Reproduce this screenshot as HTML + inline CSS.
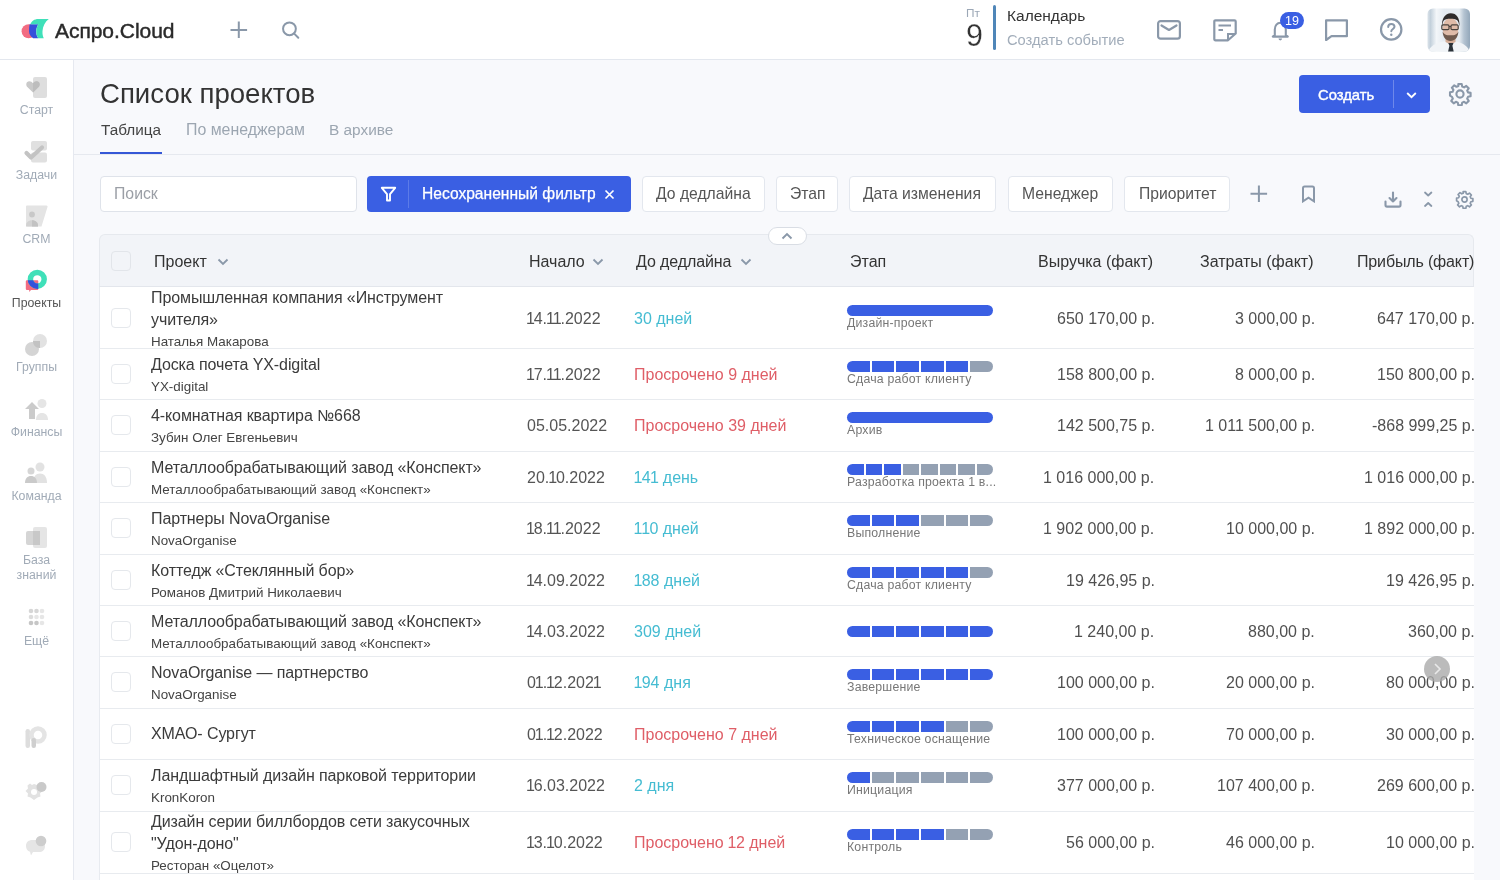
<!DOCTYPE html>
<html lang="ru">
<head>
<meta charset="utf-8">
<title>Список проектов</title>
<style>
*{box-sizing:border-box;margin:0;padding:0}
html,body{width:1500px;height:880px;overflow:hidden}
body{font-family:"Liberation Sans",sans-serif;background:#f8f9fc;color:#333;position:relative}
.abs{position:absolute}
.t{position:absolute;white-space:nowrap;will-change:transform}
.box{position:absolute;background:#fff;border:1px solid #e3e7ee;border-radius:4px}
.cb{position:absolute;width:20px;height:20px;border:1px solid #e5e8ec;border-radius:4px;background:#fff}
#rows{position:absolute;left:0;top:0;width:1474px;height:880px;overflow:hidden}
.rowbg{position:absolute;left:99px;width:1375px;background:#fff}
.hline{position:absolute;left:99px;width:1375px;height:1px;background:#e8ebef}
.stage{position:absolute;width:146px}
.n1{margin:0 -1.1px}
.m1{margin:0 -0.6px}
.bar{width:146px;height:11px}
.segs{display:flex;gap:2px}
.segs i{flex:1;height:11px;display:block}
</style>
</head>
<body>
<div class="abs" style="left:0;top:0;width:1500px;height:59px;background:#fff"></div>
<div class="abs" style="left:0;top:59px;width:1500px;height:1px;background:#e3e7ee"></div>
<svg class="abs" style="left:18px;top:15px" width="34" height="27" viewBox="0 0 34 27">
<circle cx="10.6" cy="16.3" r="7" fill="#f26c82"/>
<path d="M11.6 9.3H20.3C19 11.5 18.2 14 18.2 16.5C18.2 19.2 19 21.4 20.3 23.3H15.2C12.8 21.8 11 19.3 11 16.3C11 13.8 11.2 11.3 11.6 9.3Z" fill="#3451db"/>
<path d="M12.3 9.3C13.5 6.2 16.3 4 20.3 4H30.8C27.2 6.8 24.8 11 24.5 16C24.3 19 24.8 21.4 25.8 23.3H20.3C19 21.4 18.2 19.2 18.2 16.5C18.2 14 19 11.5 20.3 9.3Z" fill="#3fe0b9"/>
</svg>
<div class="t" style="left:55px;top:18.00px;font-size:21px;line-height:26px;color:#2a2a2a;-webkit-text-stroke:0.45px #2a2a2a;letter-spacing:-0.05px">Аспро.Cloud</div>
<svg class="abs" style="left:229px;top:20px" width="20" height="20" viewBox="0 0 20 20"><path d="M9.8 1.6V17.9M1.5 9.9H18.1" stroke="#8a98a9" stroke-width="2" fill="none"/></svg>
<svg class="abs" style="left:281px;top:20px" width="20" height="20" viewBox="0 0 20 20"><circle cx="8.45" cy="8.8" r="6.4" stroke="#8a98a9" stroke-width="2" fill="none"/><path d="M13.2 13.6L17.3 17.7" stroke="#8a98a9" stroke-width="2" stroke-linecap="round"/></svg>
<div class="t" style="left:965.5px;top:6.00px;font-size:11.8px;line-height:15px;color:#9ba7b6;">Пт</div>
<div class="t" style="left:965.5px;top:16.00px;font-size:30.5px;line-height:38px;color:#333;-webkit-text-stroke:0.25px #fff">9</div>
<div class="abs" style="left:993px;top:5px;width:3px;height:45px;background:#4f86b8;border-radius:2px"></div>
<div class="t" style="left:1006.5px;top:6.00px;font-size:15.5px;line-height:19px;color:#333;">Календарь</div>
<div class="t" style="left:1006.5px;top:31.00px;font-size:14.7px;line-height:18px;color:#a2adba;">Создать событие</div>
<svg class="abs" style="left:1156px;top:19px" width="26" height="22" viewBox="0 0 26 22"><rect x="2.1" y="2.1" width="21.8" height="17.6" rx="2.5" stroke="#8a98a9" stroke-width="2.2" fill="none"/><path d="M5.5 6.5L13 11L20.5 6.5" stroke="#8a98a9" stroke-width="2.2" fill="none" stroke-linecap="round" stroke-linejoin="round"/></svg>
<svg class="abs" style="left:1212px;top:18px" width="26" height="24" viewBox="0 0 26 24"><path d="M2.3 3.5Q2.3 2.3 3.5 2.3H22.5Q23.7 2.3 23.7 3.5V15.5L16 22.3H3.5Q2.3 22.3 2.3 21.1Z" stroke="#8a98a9" stroke-width="2.2" fill="none" stroke-linejoin="round"/><path d="M16 22V16H23" stroke="#8a98a9" stroke-width="2" fill="none"/><path d="M6.5 7.6H19M6.5 12H11" stroke="#8a98a9" stroke-width="2" fill="none"/></svg>
<svg class="abs" style="left:1270px;top:18px" width="22" height="24" viewBox="0 0 22 24"><path d="M4.8 17V11.5C4.8 7.6 7.3 4.8 10.3 4.8C13.3 4.8 15.8 7.6 15.8 11.5V17L17.8 18.6H2.8Z" stroke="#8a98a9" stroke-width="2.1" fill="none" stroke-linejoin="round"/><path d="M8.5 20.6A1.8 1.8 0 0 0 12.1 20.6Z" fill="#8a98a9"/></svg>
<div class="abs" style="left:1280px;top:12px;width:24px;height:17px;border-radius:9px;background:#3a5fe3"></div>
<div class="t" style="left:1280px;top:13.00px;font-size:12.5px;line-height:16px;color:#fff;width:24px;text-align:center;">19</div>
<svg class="abs" style="left:1324px;top:18px" width="25" height="23" viewBox="0 0 25 23"><path d="M2.1 2.3H22.9V18.2H7.5L2.1 22Z" stroke="#8a98a9" stroke-width="2.2" fill="none" stroke-linejoin="round"/></svg>
<svg class="abs" style="left:1379px;top:17px" width="25" height="25" viewBox="0 0 25 25"><circle cx="12.2" cy="12.4" r="10.2" stroke="#8a98a9" stroke-width="2.2" fill="none"/><path d="M9.2 10C9.2 8 10.6 6.9 12.3 6.9C14.1 6.9 15.5 8 15.5 9.8C15.5 11.8 12.3 12.2 12.3 14.3" stroke="#8a98a9" stroke-width="2" fill="none" stroke-linecap="round"/><circle cx="12.3" cy="17.7" r="1.2" fill="#8a98a9"/></svg>
<svg class="abs" style="left:1427px;top:8px" width="43" height="44" viewBox="0 0 43 44">
<defs><clipPath id="avc"><rect x="0.5" y="0.5" width="42.5" height="43" rx="5.5"/></clipPath>
<linearGradient id="avbg" x1="0" x2="1" y1="0" y2="0"><stop offset="0" stop-color="#dfe6ec"/><stop offset="0.08" stop-color="#c3d0db"/><stop offset="0.22" stop-color="#f3f6f9"/><stop offset="0.4" stop-color="#e4eaf0"/><stop offset="0.75" stop-color="#e6ecf1"/><stop offset="0.86" stop-color="#b4c3d1"/><stop offset="1" stop-color="#93a7ba"/></linearGradient>
<filter id="avb" x="-10%" y="-10%" width="120%" height="120%"><feGaussianBlur stdDeviation="0.6"/></filter></defs>
<g clip-path="url(#avc)">
<rect width="43" height="44" fill="url(#avbg)"/>
<g filter="url(#avb)">
<path d="M1 44C3 38 9 35 15.5 33.5L23.5 32.5L31 34C37 35.5 41 39 43 44Z" fill="#f1f4f7"/>
<path d="M18.5 28H28.5V34L23.5 36.5L18.5 34Z" fill="#d4ad98"/>
<ellipse cx="23.5" cy="20.5" rx="7.9" ry="10.6" fill="#dfbba8"/>
<path d="M15.6 23.5C16 29.5 19 33 23.5 33C28 33 31 29.5 31.4 23.5C30 26.5 28 27.3 23.5 27.3C19 27.3 17 26.5 15.6 23.5Z" fill="#6f5a4d"/>
<path d="M15 19C14.5 10.5 18 5.2 23.8 5.2C29.6 5.2 33 9.8 32.5 18.5C32 15.5 31.2 13 30.2 12.2C28.5 11.2 26 10.8 23.5 10.8C20 10.8 17.8 11.3 16.8 12.5C15.9 13.7 15.4 16 15 19Z" fill="#2f2b29"/>
<rect x="14.8" y="16.8" width="7.2" height="4.8" rx="1.2" fill="none" stroke="#4a423c" stroke-width="1.2"/>
<rect x="24" y="16.8" width="7.2" height="4.8" rx="1.2" fill="none" stroke="#4a423c" stroke-width="1.2"/>
<path d="M22 18.5H24" stroke="#4a423c" stroke-width="1"/>
<path d="M21.3 35H26.5L25.4 37.8L26.8 44H21L22.4 37.8Z" fill="#2c3139"/>
</g>
</g></svg>
<div class="abs" style="left:0;top:60px;width:73px;height:820px;background:#fff"></div>
<div class="abs" style="left:73px;top:60px;width:1px;height:820px;background:#e6e9f0"></div>
<svg class="abs" style="left:21px;top:77px" width="30" height="23" viewBox="0 0 30 23"><rect x="12" y="0" width="14" height="21" rx="2" fill="#dedede"/><path d="M12 15.5L6.6 10.3C4.3 8 5.2 4.2 8.2 4.2C10 4.2 11 5 12 6.2C13 5 14 4.2 15.8 4.2C18.8 4.2 19.7 8 17.4 10.3Z" fill="#c9c9c9"/><path d="M12 6.2C13 5 14 4.2 15.8 4.2C18.8 4.2 19.7 8 17.4 10.3L12 15.5Z" fill="#bdbdbd"/></svg>
<div class="t" style="left:0px;top:103.00px;font-size:12.3px;line-height:15px;color:#a1abb7;width:73px;text-align:center;">Старт</div>
<svg class="abs" style="left:21px;top:141px" width="30" height="23" viewBox="0 0 30 23"><rect x="10" y="0" width="16" height="9.5" rx="2" fill="#e0e0e0"/><rect x="10" y="11.5" width="16" height="10" rx="2" fill="#e0e0e0"/><path d="M5.5 12L10 16.5L21 6.5" stroke="#c3c3c3" stroke-width="4.2" fill="none" stroke-linecap="round" stroke-linejoin="round"/></svg>
<div class="t" style="left:0px;top:168.00px;font-size:12.3px;line-height:15px;color:#a1abb7;width:73px;text-align:center;">Задачи</div>
<svg class="abs" style="left:21px;top:205px" width="30" height="23" viewBox="0 0 30 23"><path d="M6 0.5H25.5Q27 0.5 26.5 2L20.5 21.5H6.5Q5 21.5 5 20V1.5Q5 0.5 6 0.5Z" fill="#e4e4e4"/><circle cx="11" cy="9.5" r="2.9" fill="#c8c8c8"/><path d="M5 21.5V20.5C5 17.3 7.6 15.2 11 15.2C14.4 15.2 17 17.3 17 20.5V21.5Z" fill="#d2d2d2"/><path d="M11 15.2C14.4 15.2 17 17.3 17 20.5V21.5H11Z" fill="#c2c2c2"/></svg>
<div class="t" style="left:0px;top:232.00px;font-size:12.3px;line-height:15px;color:#a1abb7;width:73px;text-align:center;">CRM</div>
<svg class="abs" style="left:21px;top:269px" width="30" height="23" viewBox="0 0 30 23"><defs><clipPath id="bub"><path d="M6 11.3H16.3Q17.3 11.3 17.3 12.3V20Q17.3 21 16.3 21H10L8.2 23V21H6Q4.8 21 4.8 20V12.3Q4.8 11.3 6 11.3Z"/></clipPath></defs><path d="M6 11.3H16.3Q17.3 11.3 17.3 12.3V20Q17.3 21 16.3 21H10L8.2 23V21H6Q4.8 21 4.8 20V12.3Q4.8 11.3 6 11.3Z" fill="#f26c82"/><circle cx="16.3" cy="10.3" r="6.9" stroke="#3fe0b9" stroke-width="5.5" fill="none"/><circle cx="16.3" cy="10.3" r="6.9" stroke="#3451db" stroke-width="5.5" fill="none" clip-path="url(#bub)"/></svg>
<div class="t" style="left:0px;top:296.00px;font-size:12.3px;line-height:15px;color:#555;width:73px;text-align:center;">Проекты</div>
<svg class="abs" style="left:21px;top:334px" width="30" height="23" viewBox="0 0 30 23"><circle cx="19" cy="7" r="7" fill="#e2e2e2"/><circle cx="11" cy="15" r="7" fill="#d4d4d4"/><path d="M12 7H19V14H18.5C14.5 14 12 11 12 7Z" fill="#c2c2c2"/></svg>
<div class="t" style="left:0px;top:360.00px;font-size:12.3px;line-height:15px;color:#a1abb7;width:73px;text-align:center;">Группы</div>
<svg class="abs" style="left:21px;top:398.5px" width="30" height="23" viewBox="0 0 30 23"><circle cx="21" cy="4.5" r="4.5" fill="#e5e5e5"/><path d="M15 21C15 16.5 17.5 14 21 14C24.5 14 27 16.5 27 21Z" fill="#e5e5e5"/><path d="M11 3L4 10H8V20H14V10H18Z" fill="#cbcbcb"/></svg>
<div class="t" style="left:0px;top:425.00px;font-size:12.3px;line-height:15px;color:#a1abb7;width:73px;text-align:center;">Финансы</div>
<svg class="abs" style="left:21px;top:462px" width="30" height="23" viewBox="0 0 30 23"><circle cx="19" cy="5" r="4.5" fill="#e2e2e2"/><path d="M12 21C12 14.5 15 11.5 19 11.5C23 11.5 26 14.5 26 21Z" fill="#e2e2e2"/><circle cx="10" cy="9" r="3.5" fill="#d6d6d6"/><path d="M4 21C4 16.5 6.5 14 10 14C13.5 14 16 16.5 16 21Z" fill="#cacaca"/></svg>
<div class="t" style="left:0px;top:489.00px;font-size:12.3px;line-height:15px;color:#a1abb7;width:73px;text-align:center;">Команда</div>
<svg class="abs" style="left:21px;top:527px" width="30" height="23" viewBox="0 0 30 23"><rect x="12" y="0" width="14" height="21" rx="2" fill="#e5e5e5"/><rect x="5" y="4" width="14" height="14" rx="2" fill="#d5d5d5"/><rect x="12" y="4" width="7" height="14" fill="#c8c8c8"/></svg>
<div class="t" style="left:0px;top:553.00px;font-size:12.3px;line-height:15px;color:#a1abb7;width:73px;text-align:center;">База</div>
<svg class="abs" style="left:21px;top:608px" width="30" height="23" viewBox="0 0 30 23"><g><circle cx="10" cy="3" r="2.3" fill="#d6d6d6"/><circle cx="15.5" cy="3" r="2.3" fill="#d6d6d6"/><circle cx="21" cy="3" r="2.3" fill="#e6e6e6"/><circle cx="10" cy="9" r="2.3" fill="#dcdcdc"/><circle cx="15.5" cy="9" r="2.3" fill="#e6e6e6"/><circle cx="21" cy="9" r="2.3" fill="#e6e6e6"/><circle cx="10" cy="15" r="2.3" fill="#c6c6c6"/><circle cx="15.5" cy="15" r="2.3" fill="#c6c6c6"/><circle cx="21" cy="15" r="2.3" fill="#e6e6e6"/></g></svg>
<div class="t" style="left:0px;top:634.00px;font-size:12.3px;line-height:15px;color:#a1abb7;width:73px;text-align:center;">Ещё</div>
<div class="t" style="left:0px;top:568.00px;font-size:12.3px;line-height:15px;color:#a1abb7;width:73px;text-align:center;">знаний</div>
<svg class="abs" style="left:22px;top:726px" width="28" height="24" viewBox="0 0 28 24"><rect x="3.5" y="3" width="4.5" height="19" rx="2.2" fill="#dddddd"/><circle cx="16" cy="9" r="6.5" stroke="#e4e4e4" stroke-width="4.5" fill="none"/><rect x="9.5" y="12" width="4.5" height="10" rx="2.2" fill="#cfcfcf"/></svg>
<svg class="abs" style="left:22px;top:780px" width="28" height="24" viewBox="0 0 28 24"><path d="M12 4L15 5L17 3.5L19 5.5L18.5 8.5L20.5 11L18 13.5L18.5 16.5L15.5 17.5L12 20L8.5 17.5L5.5 16.5L6 13.5L3.5 11L6 8.5L5.5 5.5L8 3.5L10 5Z" fill="#e2e2e2"/><circle cx="12" cy="12" r="3" fill="#fff"/><circle cx="19.5" cy="7" r="5" fill="#c9c9c9"/></svg>
<svg class="abs" style="left:22px;top:833px" width="28" height="24" viewBox="0 0 28 24"><path d="M4 13C4 9 6.5 7 10.5 7H17C20.5 7 23 9 23 13C23 17 20.5 19 17 19H11L9 22.5L8 18.8C5.5 18 4 16 4 13Z" fill="#e5e5e5"/><circle cx="19" cy="8" r="5.3" fill="#cdcdcd"/></svg>
<div class="t" style="left:100px;top:77.00px;font-size:27.6px;line-height:34px;color:#333;">Список проектов</div>
<div class="t" style="left:100.5px;top:120.00px;font-size:15.3px;line-height:19px;color:#444;">Таблица</div>
<div class="t" style="left:185.5px;top:120.00px;font-size:15.9px;line-height:20px;color:#9ca6b1;">По менеджерам</div>
<div class="t" style="left:329.3px;top:120.00px;font-size:15.4px;line-height:19px;color:#9ca6b1;">В архиве</div>
<div class="abs" style="left:74px;top:154px;width:1426px;height:1px;background:#e6e9ef"></div>
<div class="abs" style="left:100px;top:152px;width:62px;height:2px;background:#3557d6"></div>
<div class="abs" style="left:1299px;top:75px;width:131px;height:38px;background:#3a5fe3;border-radius:4px"></div>
<div class="t" style="left:1318px;top:86.00px;font-size:14.8px;line-height:18px;color:#fff;-webkit-text-stroke:0.4px #fff">Создать</div>
<div class="abs" style="left:1393px;top:80px;width:1px;height:28px;background:#6e88ea"></div>
<svg class="abs" style="left:1405px;top:90px" width="13" height="10" viewBox="0 0 13 10"><path d="M2.2 3L6.5 7.2L10.8 3" stroke="#fff" stroke-width="1.8" fill="none"/></svg>
<svg class="abs" style="left:1448px;top:82px" width="24" height="24" viewBox="0 0 24 24"><path d="M10.3 2h3.4l.5 2.6 1.9.8 2.2-1.5 2.4 2.4-1.5 2.2.8 1.9 2.6.5v3.4l-2.6.5-.8 1.9 1.5 2.2-2.4 2.4-2.2-1.5-1.9.8-.5 2.6h-3.4l-.5-2.6-1.9-.8-2.2 1.5-2.4-2.4 1.5-2.2-.8-1.9L2 13.7v-3.4l2.6-.5.8-1.9-1.5-2.2 2.4-2.4 2.2 1.5 1.9-.8z" stroke="#8a98a9" stroke-width="2.1" fill="none" stroke-linejoin="round"/><circle cx="12" cy="12" r="3.6" stroke="#8a98a9" stroke-width="2.1" fill="none"/></svg>
<div class="box" style="left:100px;top:176px;width:257px;height:36px;border-color:#dfe3ea"></div>
<div class="t" style="left:114px;top:184.00px;font-size:15.8px;line-height:20px;color:#9b9fa6;">Поиск</div>
<div class="abs" style="left:367px;top:176px;width:264px;height:36px;background:#3a5fe3;border-radius:4px"></div>
<div class="abs" style="left:408px;top:180px;width:1px;height:28px;background:#5c7be8"></div>
<svg class="abs" style="left:380px;top:186px" width="17" height="16" viewBox="0 0 17 16"><path d="M1.8 1.8H15.2L10 8.2V14.5H7V8.2Z" stroke="#fff" stroke-width="1.9" fill="none" stroke-linejoin="round"/></svg>
<div class="t" style="left:422px;top:184.00px;font-size:15.6px;line-height:20px;color:#fff;-webkit-text-stroke:0.25px #fff">Несохраненный фильтр</div>
<svg class="abs" style="left:604px;top:189px" width="11" height="11" viewBox="0 0 11 11"><path d="M1.5 1.5L9.5 9.5M9.5 1.5L1.5 9.5" stroke="#fff" stroke-width="1.7"/></svg>
<div class="box" style="left:642px;top:176px;width:123px;height:36px"></div><div class="t" style="left:656px;top:184.00px;font-size:15.7px;line-height:20px;color:#555;">До дедлайна</div>
<div class="box" style="left:776px;top:176px;width:61.5px;height:36px"></div><div class="t" style="left:789.6px;top:184.00px;font-size:15.7px;line-height:20px;color:#555;">Этап</div>
<div class="box" style="left:849px;top:176px;width:147px;height:36px"></div><div class="t" style="left:862.6px;top:184.00px;font-size:15.7px;line-height:20px;color:#555;">Дата изменения</div>
<div class="box" style="left:1008px;top:176px;width:105px;height:36px"></div><div class="t" style="left:1021.5px;top:184.00px;font-size:15.7px;line-height:20px;color:#555;">Менеджер</div>
<div class="box" style="left:1124px;top:176px;width:106px;height:36px"></div><div class="t" style="left:1138.9px;top:184.00px;font-size:15.7px;line-height:20px;color:#555;">Приоритет</div>
<svg class="abs" style="left:1250px;top:185px" width="18" height="18" viewBox="0 0 18 18"><path d="M8.9 0.6V16.9M0.5 8.7H17.1" stroke="#8a98a9" stroke-width="2" fill="none"/></svg>
<svg class="abs" style="left:1301px;top:185px" width="15" height="18" viewBox="0 0 15 18"><path d="M2 16.3V3.2Q2 1.6 3.6 1.6H11.4Q13 1.6 13 3.2V16.3L7.5 12.6Z" stroke="#8a98a9" stroke-width="2" fill="none" stroke-linejoin="miter"/></svg>
<svg class="abs" style="left:1383px;top:190px" width="20" height="18" viewBox="0 0 20 18"><path d="M10 2.5V11.5M6.5 8L10 11.5L13.5 8" stroke="#8a98a9" stroke-width="2.1" fill="none" stroke-linecap="round" stroke-linejoin="round"/><path d="M2.5 11.5V15Q2.5 16.6 4 16.6H16Q17.5 16.6 17.5 15V11.5" stroke="#8a98a9" stroke-width="2.1" fill="none" stroke-linecap="round"/></svg>
<svg class="abs" style="left:1422px;top:190px" width="12" height="18" viewBox="0 0 12 18"><path d="M3 2.5L6.2 5.5L9.4 2.5M3 16L6.2 13L9.4 16" stroke="#8a98a9" stroke-width="1.8" fill="none" stroke-linecap="round" stroke-linejoin="round"/></svg>
<svg class="abs" style="left:1455px;top:190px" width="19" height="19" viewBox="0 0 24 24"><path d="M10.3 2h3.4l.5 2.6 1.9.8 2.2-1.5 2.4 2.4-1.5 2.2.8 1.9 2.6.5v3.4l-2.6.5-.8 1.9 1.5 2.2-2.4 2.4-2.2-1.5-1.9.8-.5 2.6h-3.4l-.5-2.6-1.9-.8-2.2 1.5-2.4-2.4 1.5-2.2-.8-1.9L2 13.7v-3.4l2.6-.5.8-1.9-1.5-2.2 2.4-2.4 2.2 1.5 1.9-.8z" stroke="#8a98a9" stroke-width="2.1" fill="none" stroke-linejoin="round"/><circle cx="12" cy="12" r="3.3" stroke="#8a98a9" stroke-width="2.1" fill="none"/></svg>
<div class="abs" style="left:99px;top:234px;width:1375px;height:53px;background:#f2f4f8;border-radius:6px 6px 0 0;border:1px solid #e6e9ee;border-bottom:none"></div>
<div class="abs" style="left:99px;top:286px;width:1375px;height:1px;background:#e3e6ec"></div>
<div class="cb" style="left:111px;top:251px;background:#f2f4f8;border-color:#e2e5ea"></div>
<div class="t" style="left:153.5px;top:252.00px;font-size:16px;line-height:20px;color:#333;">Проект</div>
<svg class="abs" style="left:216.5px;top:257.5px" width="12" height="8" viewBox="0 0 12 8"><path d="M1.5 1.5L6 6L10.5 1.5" stroke="#8a98a9" stroke-width="1.8" fill="none"/></svg>
<div class="t" style="left:528.5px;top:252.00px;font-size:16px;line-height:20px;color:#333;">Начало</div>
<svg class="abs" style="left:592px;top:257.5px" width="12" height="8" viewBox="0 0 12 8"><path d="M1.5 1.5L6 6L10.5 1.5" stroke="#8a98a9" stroke-width="1.8" fill="none"/></svg>
<div class="t" style="left:635.5px;top:252.00px;font-size:16px;line-height:20px;color:#333;letter-spacing:-0.1px">До дедлайна</div>
<svg class="abs" style="left:740px;top:257.5px" width="12" height="8" viewBox="0 0 12 8"><path d="M1.5 1.5L6 6L10.5 1.5" stroke="#8a98a9" stroke-width="1.8" fill="none"/></svg>
<div class="t" style="left:849.5px;top:252.00px;font-size:16px;line-height:20px;color:#333;">Этап</div>
<div class="t" style="right:347.00px;top:252.00px;font-size:16px;line-height:20px;color:#333;">Выручка (факт)</div>
<div class="t" style="right:186.50px;top:252.00px;font-size:16px;line-height:20px;color:#333;">Затраты (факт)</div>
<div class="t" style="right:26.00px;top:252.00px;font-size:16px;line-height:20px;color:#333;letter-spacing:-0.15px">Прибыль (факт)</div>
<div id="rows">
<div class="rowbg" style="top:287px;height:61px"></div>
<div class="rowbg" style="top:348px;height:51px"></div>
<div class="rowbg" style="top:399px;height:52px"></div>
<div class="rowbg" style="top:451px;height:51px"></div>
<div class="rowbg" style="top:502px;height:52px"></div>
<div class="rowbg" style="top:554px;height:51px"></div>
<div class="rowbg" style="top:605px;height:51px"></div>
<div class="rowbg" style="top:656px;height:52px"></div>
<div class="rowbg" style="top:708px;height:51px"></div>
<div class="rowbg" style="top:759px;height:52px"></div>
<div class="rowbg" style="top:811px;height:62px"></div><div class="rowbg" style="top:873px;height:20px"></div><div class="hline" style="top:348px"></div>
<div class="hline" style="top:399px"></div>
<div class="hline" style="top:451px"></div>
<div class="hline" style="top:502px"></div>
<div class="hline" style="top:554px"></div>
<div class="hline" style="top:605px"></div>
<div class="hline" style="top:656px"></div>
<div class="hline" style="top:708px"></div>
<div class="hline" style="top:759px"></div>
<div class="hline" style="top:811px"></div>
<div class="hline" style="top:873px"></div><div class="cb" style="left:111px;top:307.5px"></div><div class="t" style="left:151px;top:288.00px;font-size:16px;line-height:20px;color:#3b3b3b;letter-spacing:-0.1px">Промышленная компания «Инструмент</div><div class="t" style="left:151px;top:310.00px;font-size:16px;line-height:20px;color:#3b3b3b;letter-spacing:-0.1px">учителя»</div><div class="t" style="left:151px;top:333.00px;font-size:13.4px;line-height:17px;color:#444;">Наталья Макарова</div><div class="t" style="left:527px;top:309.00px;font-size:16px;line-height:20px;color:#555;"><span class="n1">1</span>4.<span class="n1">1</span><span class="n1">1</span>.2022</div><div class="t" style="left:634px;top:309.00px;font-size:16px;line-height:20px;color:#45bcd2;">30 дней</div><div class="stage" style="left:847px;top:304.5px"><div class="bar" style="background:#3a5fe3;border-radius:5.5px"></div></div><div class="t" style="left:847px;top:316.00px;font-size:12.3px;line-height:15px;color:#777;letter-spacing:0.2px">Дизайн-проект</div><div class="t" style="right:319.50px;top:309.00px;font-size:16px;line-height:20px;color:#505050;">650 170,00 р.</div><div class="t" style="right:159.00px;top:309.00px;font-size:16px;line-height:20px;color:#505050;">3 000,00 р.</div><div class="t" style="right:-1.00px;top:309.00px;font-size:16px;line-height:20px;color:#505050;">647 170,00 р.</div>
<div class="cb" style="left:111px;top:363.5px"></div><div class="t" style="left:151px;top:355.00px;font-size:16px;line-height:20px;color:#3b3b3b;letter-spacing:-0.1px">Доска почета YX-digital</div><div class="t" style="left:151px;top:378.00px;font-size:13.4px;line-height:17px;color:#444;">YX-digital</div><div class="t" style="left:527px;top:365.00px;font-size:16px;line-height:20px;color:#555;"><span class="n1">1</span>7.<span class="n1">1</span><span class="n1">1</span>.2022</div><div class="t" style="left:634px;top:365.00px;font-size:16px;line-height:20px;color:#df5e67;">Просрочено 9 дней</div><div class="stage" style="left:847px;top:360.5px"><div class="bar segs"><i style="background:#3a5fe3;border-radius:5.5px 0 0 5.5px;"></i><i style="background:#3a5fe3;"></i><i style="background:#3a5fe3;"></i><i style="background:#3a5fe3;"></i><i style="background:#3a5fe3;"></i><i style="background:#94a1b3;border-radius:0 5.5px 5.5px 0;"></i></div></div><div class="t" style="left:847px;top:372.00px;font-size:12.3px;line-height:15px;color:#777;letter-spacing:0.2px">Сдача работ клиенту</div><div class="t" style="right:319.50px;top:365.00px;font-size:16px;line-height:20px;color:#505050;">158 800,00 р.</div><div class="t" style="right:159.00px;top:365.00px;font-size:16px;line-height:20px;color:#505050;">8 000,00 р.</div><div class="t" style="right:-1.00px;top:365.00px;font-size:16px;line-height:20px;color:#505050;">150 800,00 р.</div>
<div class="cb" style="left:111px;top:415.0px"></div><div class="t" style="left:151px;top:406.00px;font-size:16px;line-height:20px;color:#3b3b3b;letter-spacing:-0.1px">4-комнатная квартира №668</div><div class="t" style="left:151px;top:429.00px;font-size:13.4px;line-height:17px;color:#444;">Зубин Олег Евгеньевич</div><div class="t" style="left:527px;top:416.00px;font-size:16px;line-height:20px;color:#555;">05.05.2022</div><div class="t" style="left:634px;top:416.00px;font-size:16px;line-height:20px;color:#df5e67;">Просрочено 39 дней</div><div class="stage" style="left:847px;top:412.0px"><div class="bar" style="background:#3a5fe3;border-radius:5.5px"></div></div><div class="t" style="left:847px;top:423.00px;font-size:12.3px;line-height:15px;color:#777;letter-spacing:0.2px">Архив</div><div class="t" style="right:319.50px;top:416.00px;font-size:16px;line-height:20px;color:#505050;">142 500,75 р.</div><div class="t" style="right:159.00px;top:416.00px;font-size:16px;line-height:20px;color:#505050;">1 011 500,00 р.</div><div class="t" style="right:-1.00px;top:416.00px;font-size:16px;line-height:20px;color:#505050;">-868 999,25 р.</div>
<div class="cb" style="left:111px;top:466.5px"></div><div class="t" style="left:151px;top:458.00px;font-size:16px;line-height:20px;color:#3b3b3b;letter-spacing:-0.1px">Металлообрабатывающий завод «Конспект»</div><div class="t" style="left:151px;top:481.00px;font-size:13.4px;line-height:17px;color:#444;">Металлообрабатывающий завод «Конспект»</div><div class="t" style="left:527px;top:468.00px;font-size:16px;line-height:20px;color:#555;">20.<span class="n1">1</span>0.2022</div><div class="t" style="left:634px;top:468.00px;font-size:16px;line-height:20px;color:#45bcd2;"><span class="m1">1</span>4<span class="m1">1</span> день</div><div class="stage" style="left:847px;top:463.5px"><div class="bar segs"><i style="background:#3a5fe3;border-radius:5.5px 0 0 5.5px;"></i><i style="background:#3a5fe3;"></i><i style="background:#3a5fe3;"></i><i style="background:#94a1b3;"></i><i style="background:#94a1b3;"></i><i style="background:#94a1b3;"></i><i style="background:#94a1b3;"></i><i style="background:#94a1b3;border-radius:0 5.5px 5.5px 0;"></i></div></div><div class="t" style="left:847px;top:475.00px;font-size:12.3px;line-height:15px;color:#777;letter-spacing:0.2px">Разработка проекта 1 в...</div><div class="t" style="right:319.50px;top:468.00px;font-size:16px;line-height:20px;color:#505050;">1 016 000,00 р.</div><div class="t" style="right:159.00px;top:468.00px;font-size:16px;line-height:20px;color:#505050;"></div><div class="t" style="right:-1.00px;top:468.00px;font-size:16px;line-height:20px;color:#505050;">1 016 000,00 р.</div>
<div class="cb" style="left:111px;top:518.0px"></div><div class="t" style="left:151px;top:509.00px;font-size:16px;line-height:20px;color:#3b3b3b;letter-spacing:-0.1px">Партнеры NovaOrganise</div><div class="t" style="left:151px;top:532.00px;font-size:13.4px;line-height:17px;color:#444;">NovaOrganise</div><div class="t" style="left:527px;top:519.00px;font-size:16px;line-height:20px;color:#555;"><span class="n1">1</span>8.<span class="n1">1</span><span class="n1">1</span>.2022</div><div class="t" style="left:634px;top:519.00px;font-size:16px;line-height:20px;color:#45bcd2;"><span class="m1">1</span><span class="m1">1</span>0 дней</div><div class="stage" style="left:847px;top:515.0px"><div class="bar segs"><i style="background:#3a5fe3;border-radius:5.5px 0 0 5.5px;"></i><i style="background:#3a5fe3;"></i><i style="background:#3a5fe3;"></i><i style="background:#94a1b3;"></i><i style="background:#94a1b3;"></i><i style="background:#94a1b3;border-radius:0 5.5px 5.5px 0;"></i></div></div><div class="t" style="left:847px;top:526.00px;font-size:12.3px;line-height:15px;color:#777;letter-spacing:0.2px">Выполнение</div><div class="t" style="right:319.50px;top:519.00px;font-size:16px;line-height:20px;color:#505050;">1 902 000,00 р.</div><div class="t" style="right:159.00px;top:519.00px;font-size:16px;line-height:20px;color:#505050;">10 000,00 р.</div><div class="t" style="right:-1.00px;top:519.00px;font-size:16px;line-height:20px;color:#505050;">1 892 000,00 р.</div>
<div class="cb" style="left:111px;top:569.5px"></div><div class="t" style="left:151px;top:561.00px;font-size:16px;line-height:20px;color:#3b3b3b;letter-spacing:-0.1px">Коттедж «Стеклянный бор»</div><div class="t" style="left:151px;top:584.00px;font-size:13.4px;line-height:17px;color:#444;">Романов Дмитрий Николаевич</div><div class="t" style="left:527px;top:571.00px;font-size:16px;line-height:20px;color:#555;"><span class="n1">1</span>4.09.2022</div><div class="t" style="left:634px;top:571.00px;font-size:16px;line-height:20px;color:#45bcd2;"><span class="m1">1</span>88 дней</div><div class="stage" style="left:847px;top:566.5px"><div class="bar segs"><i style="background:#3a5fe3;border-radius:5.5px 0 0 5.5px;"></i><i style="background:#3a5fe3;"></i><i style="background:#3a5fe3;"></i><i style="background:#3a5fe3;"></i><i style="background:#3a5fe3;"></i><i style="background:#94a1b3;border-radius:0 5.5px 5.5px 0;"></i></div></div><div class="t" style="left:847px;top:578.00px;font-size:12.3px;line-height:15px;color:#777;letter-spacing:0.2px">Сдача работ клиенту</div><div class="t" style="right:319.50px;top:571.00px;font-size:16px;line-height:20px;color:#505050;">19 426,95 р.</div><div class="t" style="right:159.00px;top:571.00px;font-size:16px;line-height:20px;color:#505050;"></div><div class="t" style="right:-1.00px;top:571.00px;font-size:16px;line-height:20px;color:#505050;">19 426,95 р.</div>
<div class="cb" style="left:111px;top:620.5px"></div><div class="t" style="left:151px;top:612.00px;font-size:16px;line-height:20px;color:#3b3b3b;letter-spacing:-0.1px">Металлообрабатывающий завод «Конспект»</div><div class="t" style="left:151px;top:635.00px;font-size:13.4px;line-height:17px;color:#444;">Металлообрабатывающий завод «Конспект»</div><div class="t" style="left:527px;top:622.00px;font-size:16px;line-height:20px;color:#555;"><span class="n1">1</span>4.03.2022</div><div class="t" style="left:634px;top:622.00px;font-size:16px;line-height:20px;color:#45bcd2;">309 дней</div><div class="stage" style="left:847px;top:626.0px"><div class="bar segs"><i style="background:#3a5fe3;border-radius:5.5px 0 0 5.5px;"></i><i style="background:#3a5fe3;"></i><i style="background:#3a5fe3;"></i><i style="background:#3a5fe3;"></i><i style="background:#3a5fe3;"></i><i style="background:#3a5fe3;border-radius:0 5.5px 5.5px 0;"></i></div></div><div class="t" style="right:319.50px;top:622.00px;font-size:16px;line-height:20px;color:#505050;">1 240,00 р.</div><div class="t" style="right:159.00px;top:622.00px;font-size:16px;line-height:20px;color:#505050;">880,00 р.</div><div class="t" style="right:-1.00px;top:622.00px;font-size:16px;line-height:20px;color:#505050;">360,00 р.</div>
<div class="cb" style="left:111px;top:672.0px"></div><div class="t" style="left:151px;top:663.00px;font-size:16px;line-height:20px;color:#3b3b3b;letter-spacing:-0.1px">NovaOrganise — партнерство</div><div class="t" style="left:151px;top:686.00px;font-size:13.4px;line-height:17px;color:#444;">NovaOrganise</div><div class="t" style="left:527px;top:673.00px;font-size:16px;line-height:20px;color:#555;">0<span class="n1">1</span>.<span class="n1">1</span>2.202<span class="n1">1</span></div><div class="t" style="left:634px;top:673.00px;font-size:16px;line-height:20px;color:#45bcd2;"><span class="m1">1</span>94 дня</div><div class="stage" style="left:847px;top:669.0px"><div class="bar segs"><i style="background:#3a5fe3;border-radius:5.5px 0 0 5.5px;"></i><i style="background:#3a5fe3;"></i><i style="background:#3a5fe3;"></i><i style="background:#3a5fe3;"></i><i style="background:#3a5fe3;"></i><i style="background:#3a5fe3;border-radius:0 5.5px 5.5px 0;"></i></div></div><div class="t" style="left:847px;top:680.00px;font-size:12.3px;line-height:15px;color:#777;letter-spacing:0.2px">Завершение</div><div class="t" style="right:319.50px;top:673.00px;font-size:16px;line-height:20px;color:#505050;">100 000,00 р.</div><div class="t" style="right:159.00px;top:673.00px;font-size:16px;line-height:20px;color:#505050;">20 000,00 р.</div><div class="t" style="right:-1.00px;top:673.00px;font-size:16px;line-height:20px;color:#505050;">80 000,00 р.</div>
<div class="cb" style="left:111px;top:723.5px"></div><div class="t" style="left:151px;top:724.00px;font-size:16px;line-height:20px;color:#3b3b3b;letter-spacing:-0.1px">ХМАО- Сургут</div><div class="t" style="left:527px;top:725.00px;font-size:16px;line-height:20px;color:#555;">0<span class="n1">1</span>.<span class="n1">1</span>2.2022</div><div class="t" style="left:634px;top:725.00px;font-size:16px;line-height:20px;color:#df5e67;">Просрочено 7 дней</div><div class="stage" style="left:847px;top:720.5px"><div class="bar segs"><i style="background:#3a5fe3;border-radius:5.5px 0 0 5.5px;"></i><i style="background:#3a5fe3;"></i><i style="background:#3a5fe3;"></i><i style="background:#3a5fe3;"></i><i style="background:#94a1b3;"></i><i style="background:#94a1b3;border-radius:0 5.5px 5.5px 0;"></i></div></div><div class="t" style="left:847px;top:732.00px;font-size:12.3px;line-height:15px;color:#777;letter-spacing:0.2px">Техническое оснащение</div><div class="t" style="right:319.50px;top:725.00px;font-size:16px;line-height:20px;color:#505050;">100 000,00 р.</div><div class="t" style="right:159.00px;top:725.00px;font-size:16px;line-height:20px;color:#505050;">70 000,00 р.</div><div class="t" style="right:-1.00px;top:725.00px;font-size:16px;line-height:20px;color:#505050;">30 000,00 р.</div>
<div class="cb" style="left:111px;top:775.0px"></div><div class="t" style="left:151px;top:766.00px;font-size:16px;line-height:20px;color:#3b3b3b;letter-spacing:-0.1px">Ландшафтный дизайн парковой территории</div><div class="t" style="left:151px;top:789.00px;font-size:13.4px;line-height:17px;color:#444;">KronKoron</div><div class="t" style="left:527px;top:776.00px;font-size:16px;line-height:20px;color:#555;"><span class="n1">1</span>6.03.2022</div><div class="t" style="left:634px;top:776.00px;font-size:16px;line-height:20px;color:#45bcd2;">2 дня</div><div class="stage" style="left:847px;top:772.0px"><div class="bar segs"><i style="background:#3a5fe3;border-radius:5.5px 0 0 5.5px;"></i><i style="background:#94a1b3;"></i><i style="background:#94a1b3;"></i><i style="background:#94a1b3;"></i><i style="background:#94a1b3;"></i><i style="background:#94a1b3;border-radius:0 5.5px 5.5px 0;"></i></div></div><div class="t" style="left:847px;top:783.00px;font-size:12.3px;line-height:15px;color:#777;letter-spacing:0.2px">Инициация</div><div class="t" style="right:319.50px;top:776.00px;font-size:16px;line-height:20px;color:#505050;">377 000,00 р.</div><div class="t" style="right:159.00px;top:776.00px;font-size:16px;line-height:20px;color:#505050;">107 400,00 р.</div><div class="t" style="right:-1.00px;top:776.00px;font-size:16px;line-height:20px;color:#505050;">269 600,00 р.</div>
<div class="cb" style="left:111px;top:832.0px"></div><div class="t" style="left:151px;top:812.00px;font-size:16px;line-height:20px;color:#3b3b3b;letter-spacing:-0.1px">Дизайн серии биллбордов сети закусочных</div><div class="t" style="left:151px;top:834.00px;font-size:16px;line-height:20px;color:#3b3b3b;letter-spacing:-0.1px">"Удон-доно"</div><div class="t" style="left:151px;top:857.00px;font-size:13.4px;line-height:17px;color:#444;">Ресторан «Оцелот»</div><div class="t" style="left:527px;top:833.00px;font-size:16px;line-height:20px;color:#555;"><span class="n1">1</span>3.<span class="n1">1</span>0.2022</div><div class="t" style="left:634px;top:833.00px;font-size:16px;line-height:20px;color:#df5e67;">Просрочено <span class="m1">1</span>2 дней</div><div class="stage" style="left:847px;top:829.0px"><div class="bar segs"><i style="background:#3a5fe3;border-radius:5.5px 0 0 5.5px;"></i><i style="background:#3a5fe3;"></i><i style="background:#3a5fe3;"></i><i style="background:#3a5fe3;"></i><i style="background:#94a1b3;"></i><i style="background:#94a1b3;border-radius:0 5.5px 5.5px 0;"></i></div></div><div class="t" style="left:847px;top:840.00px;font-size:12.3px;line-height:15px;color:#777;letter-spacing:0.2px">Контроль</div><div class="t" style="right:319.50px;top:833.00px;font-size:16px;line-height:20px;color:#505050;">56 000,00 р.</div><div class="t" style="right:159.00px;top:833.00px;font-size:16px;line-height:20px;color:#505050;">46 000,00 р.</div><div class="t" style="right:-1.00px;top:833.00px;font-size:16px;line-height:20px;color:#505050;">10 000,00 р.</div>
</div>
<div class="abs" style="left:99px;top:287px;width:1px;height:600px;background:#e8ebf0"></div>
<div class="abs" style="left:768px;top:227px;width:39px;height:18px;border:1px solid #d9dde4;border-radius:9px;background:#fff"></div>
<svg class="abs" style="left:781px;top:232px" width="12" height="8" viewBox="0 0 12 8"><path d="M1.5 6.5L6 2L10.5 6.5" stroke="#8a98a9" stroke-width="1.9" fill="none"/></svg>
<div class="abs" style="left:1424px;top:656px;width:26px;height:26px;border-radius:13px;background:rgba(170,170,170,0.8)"></div>
<svg class="abs" style="left:1431px;top:662px" width="12" height="14" viewBox="0 0 12 14"><path d="M4 2L9 7L4 12" stroke="#e9e9e9" stroke-width="1.6" fill="none"/></svg>
</body>
</html>
